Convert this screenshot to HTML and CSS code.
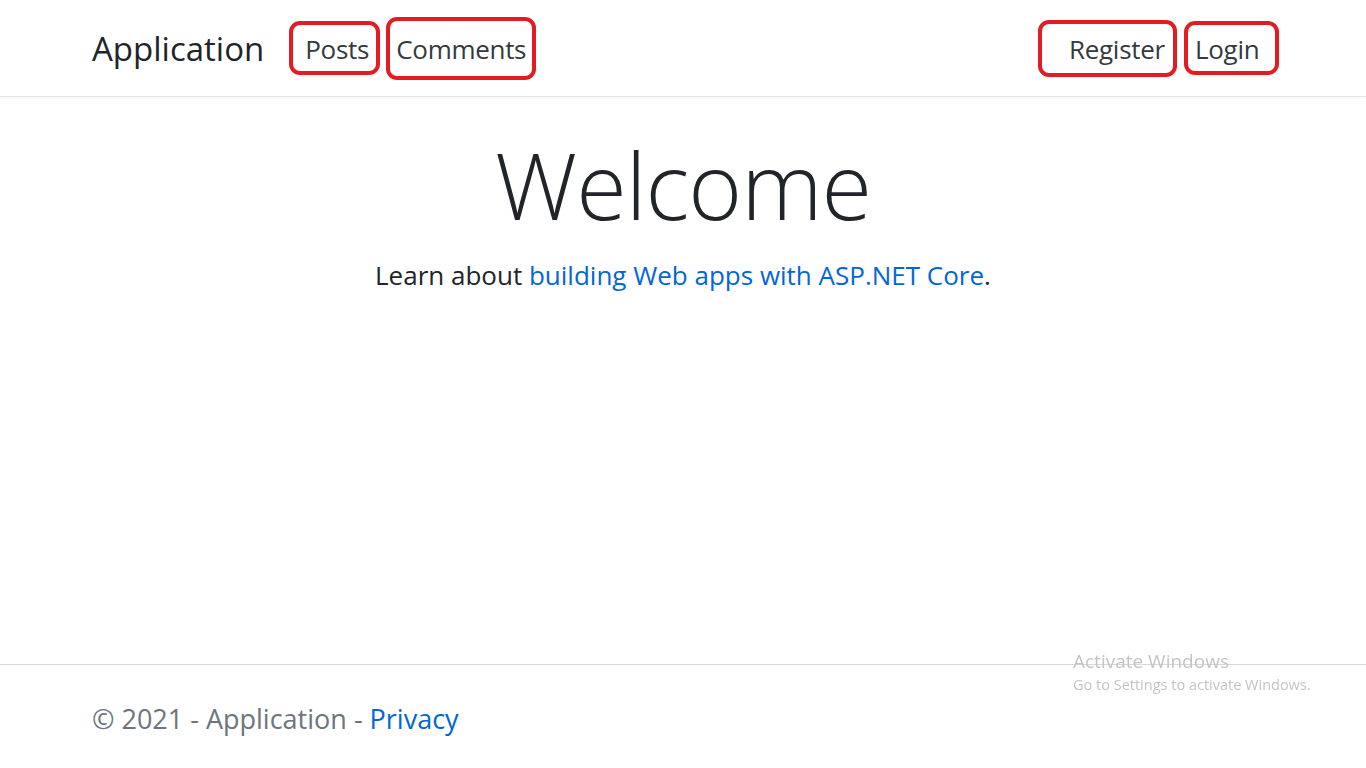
FILE: index.html
```html
<!DOCTYPE html>
<html lang="en">
<head>
<meta charset="utf-8">
<title>Home Page - Application</title>
<link rel="stylesheet" href="styles.css">
</head>
<body>
<header class="site-header">
  <nav class="navbar">
    <a class="brand" href="#">Application</a>
    <ul class="nav nav-left">
      <li><a class="nav-link mark mark-posts" href="#">Posts</a></li>
      <li><a class="nav-link mark mark-comments" href="#">Comments</a></li>
    </ul>
    <ul class="nav nav-right">
      <li><a class="nav-link mark mark-register" href="#">Register</a></li>
      <li><a class="nav-link mark mark-login" href="#">Login</a></li>
    </ul>
  </nav>
</header>
<main class="main">
  <div class="hero">
    <h1 class="display">Welcome</h1>
    <p class="lead-text">Learn about <a href="#">building Web apps with ASP.NET Core</a>.</p>
  </div>
</main>
<footer class="site-footer">
  <div class="footer-inner">&copy; 2021 - Application - <a href="#">Privacy</a></div>
</footer>
<div class="watermark">
  <div class="wm-title">Activate Windows</div>
  <div class="wm-sub">Go to Settings to activate Windows.</div>
</div>
</body>
</html>
```
FILE: styles.css
```css
html, body {
  margin: 0;
  padding: 0;
  height: 100%;
}
body {
  font-family: "Open Sans", "Noto Sans", "Liberation Sans", sans-serif;
  color: #212529;
  background: #fff;
  display: flex;
  flex-direction: column;
  min-height: 768px;
  overflow: hidden;
}
a {
  color: #0366d6;
  text-decoration: none;
}
.site-header {
  height: 96px;
  border-bottom: 1px solid #e6e6e6;
  box-shadow: 0 1px 4px rgba(0, 0, 0, 0.04);
  flex: none;
}
.navbar {
  width: 1187px;
  margin-left: 92px;
  height: 100%;
  display: flex;
  align-items: center;
  box-sizing: border-box;
}
.brand {
  font-size: 33px;
  color: #212529;
  margin-right: 25px;
  letter-spacing: 0;
}
.nav {
  list-style: none;
  margin: 0;
  padding: 0;
  display: flex;
  align-items: center;
  gap: 6px;
}
.nav-right {
  margin-left: auto;
  gap: 7px;
}
.nav-link {
  font-size: 26px;
  color: #343a40;
  display: flex;
  align-items: center;
  box-sizing: border-box;
  letter-spacing: -0.3px;
  padding-top: 2px;
}
.mark {
  border: 4px solid #e31b23;
  border-radius: 11px;
}
.mark-posts {
  width: 91px;
  height: 54px;
  padding-left: 12px;
}
.mark-comments {
  width: 150px;
  height: 63px;
  padding-left: 6px;
}
.mark-register {
  width: 139px;
  height: 57px;
  padding-left: 27px;
}
.mark-login {
  width: 95px;
  height: 54px;
  padding-left: 7px;
}
.main {
  flex: 1;
}
.hero {
  text-align: center;
  padding-top: 33px;
}
.display {
  font-size: 92px;
  font-weight: 300;
  line-height: 1.2;
  margin: 0 0 16px;
  letter-spacing: -1px;
}
.lead-text {
  font-size: 26px;
  line-height: 1.5;
  margin: 0;
  letter-spacing: 0;
}
.site-footer {
  flex: none;
  height: 103px;
  border-top: 1px solid #d5d9dc;
  color: #6c757d;
}
.footer-inner {
  margin-left: 92px;
  font-size: 27px;
  line-height: 107px;
  letter-spacing: 0;
}
.watermark {
  position: fixed;
  left: 1073px;
  top: 649px;
  color: #c4c4c4;
  font-family: "Open Sans", "Noto Sans", sans-serif;
  pointer-events: none;
}
.wm-title {
  font-size: 19px;
  line-height: 25px;
}
.wm-sub {
  font-size: 14.5px;
  line-height: 22px;
}
```
